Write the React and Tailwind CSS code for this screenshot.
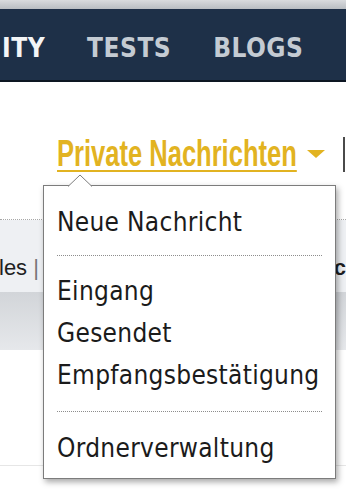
import React from "react";

const navItems = [
  { label: "ITY", active: true },
  { label: "TESTS" },
  { label: "BLOGS" },
  { label: "FORUM" },
];

const menuGroups = [
  ["Neue Nachricht"],
  ["Eingang", "Gesendet", "Empfangsbestätigung"],
  ["Ordnerverwaltung"],
];

function MenuItem({ label }) {
  return (
    <a
      href="#"
      className="block h-[42px] leading-[42px] whitespace-nowrap text-[26px] tracking-[0.3px] text-[#1b1b1b]"
    >
      {label}
    </a>
  );
}

function Dropdown() {
  return (
    <div className="absolute left-[43px] top-[185px] w-[293px] border border-[#7c7c7c] bg-white pl-[13px] pr-[13px] pt-[15px] pb-[9px] shadow-[2px_3px_6px_rgba(0,0,0,0.35)] font-['DejaVu_Sans_Condensed','DejaVu_Sans',sans-serif]">
      {/* little notch pointing at the link */}
      <svg
        className="absolute -top-[12px] left-[24px]"
        width="26"
        height="13"
        viewBox="0 0 26 13"
      >
        <path d="M0 12.5 L12 1 L24 12.5 Z" fill="#fff" />
        <path d="M0 12.5 L12 1 L24 12.5" fill="none" stroke="#7c7c7c" strokeWidth="1" />
      </svg>

      <MenuItem label={menuGroups[0][0]} />
      <div className="mt-[12px] mb-[14px] border-t border-dotted border-[#8d8d8d]" />
      {menuGroups[1].map((item) => (
        <MenuItem key={item} label={item} />
      ))}
      <div className="my-[15px] border-t border-dotted border-[#8d8d8d]" />
      <MenuItem label={menuGroups[2][0]} />
    </div>
  );
}

export default function App() {
  return (
    <div className="relative w-[346px] h-[500px] overflow-hidden bg-white font-['Liberation_Sans',Arial,sans-serif]">
      {/* browser strip */}
      <div className="h-[9px] bg-gradient-to-b from-[#d9dbde] to-[#b9bdc2]" />

      {/* main nav */}
      <nav className="h-[73px] bg-[#1e3048] border-b-2 border-[#0d1622] flex items-center gap-[42px] pl-[2px] pt-[7px] overflow-hidden whitespace-nowrap font-['DejaVu_Sans_Condensed','DejaVu_Sans',sans-serif] font-bold text-[26px] tracking-[0.5px]">
        {navItems.map((item) => (
          <span
            key={item.label}
            className={item.active ? "text-[#f3f5f7]" : "text-[#c4cbd3]"}
          >
            {item.label}
          </span>
        ))}
      </nav>

      {/* user bar */}
      <div className="h-[137px] flex items-start pl-[57px] pt-[53px]">
        <a href="#" className="block w-[240px] h-[40px] overflow-visible">
          <span className="inline-block origin-left scale-x-[0.69] whitespace-nowrap text-[37px] leading-none font-bold text-[#e2b321] underline decoration-[2px] underline-offset-[4px]">
            Private Nachrichten
          </span>
        </a>
        <svg className="ml-[10px] mt-[15px]" width="18" height="8" viewBox="0 0 18 8">
          <path d="M0 0 H18 L9 8 Z" fill="#e2b321" />
        </svg>
        <div className="ml-[18px] mt-[2px] h-[35px] w-[2px] bg-[#4a4a4a]" />
      </div>

      {/* content behind the menu */}
      <div className="border-t border-dotted border-[#a8a8a8]" />
      <div className="h-[72px] bg-[#eef0f3] flex items-start justify-between pt-[31px] text-[22px] text-[#1f1f1f]">
        <span className="-ml-[1px]">
          les <span className="text-[#777]">|</span>
        </span>
        <span className="font-bold">c</span>
      </div>
      <div className="h-[58px] bg-gradient-to-b from-[#d2d5d9] to-[#e6e8eb]" />
      <div className="h-[116px] border-b border-[#e6e6e6]" />

      <Dropdown />
    </div>
  );
}
